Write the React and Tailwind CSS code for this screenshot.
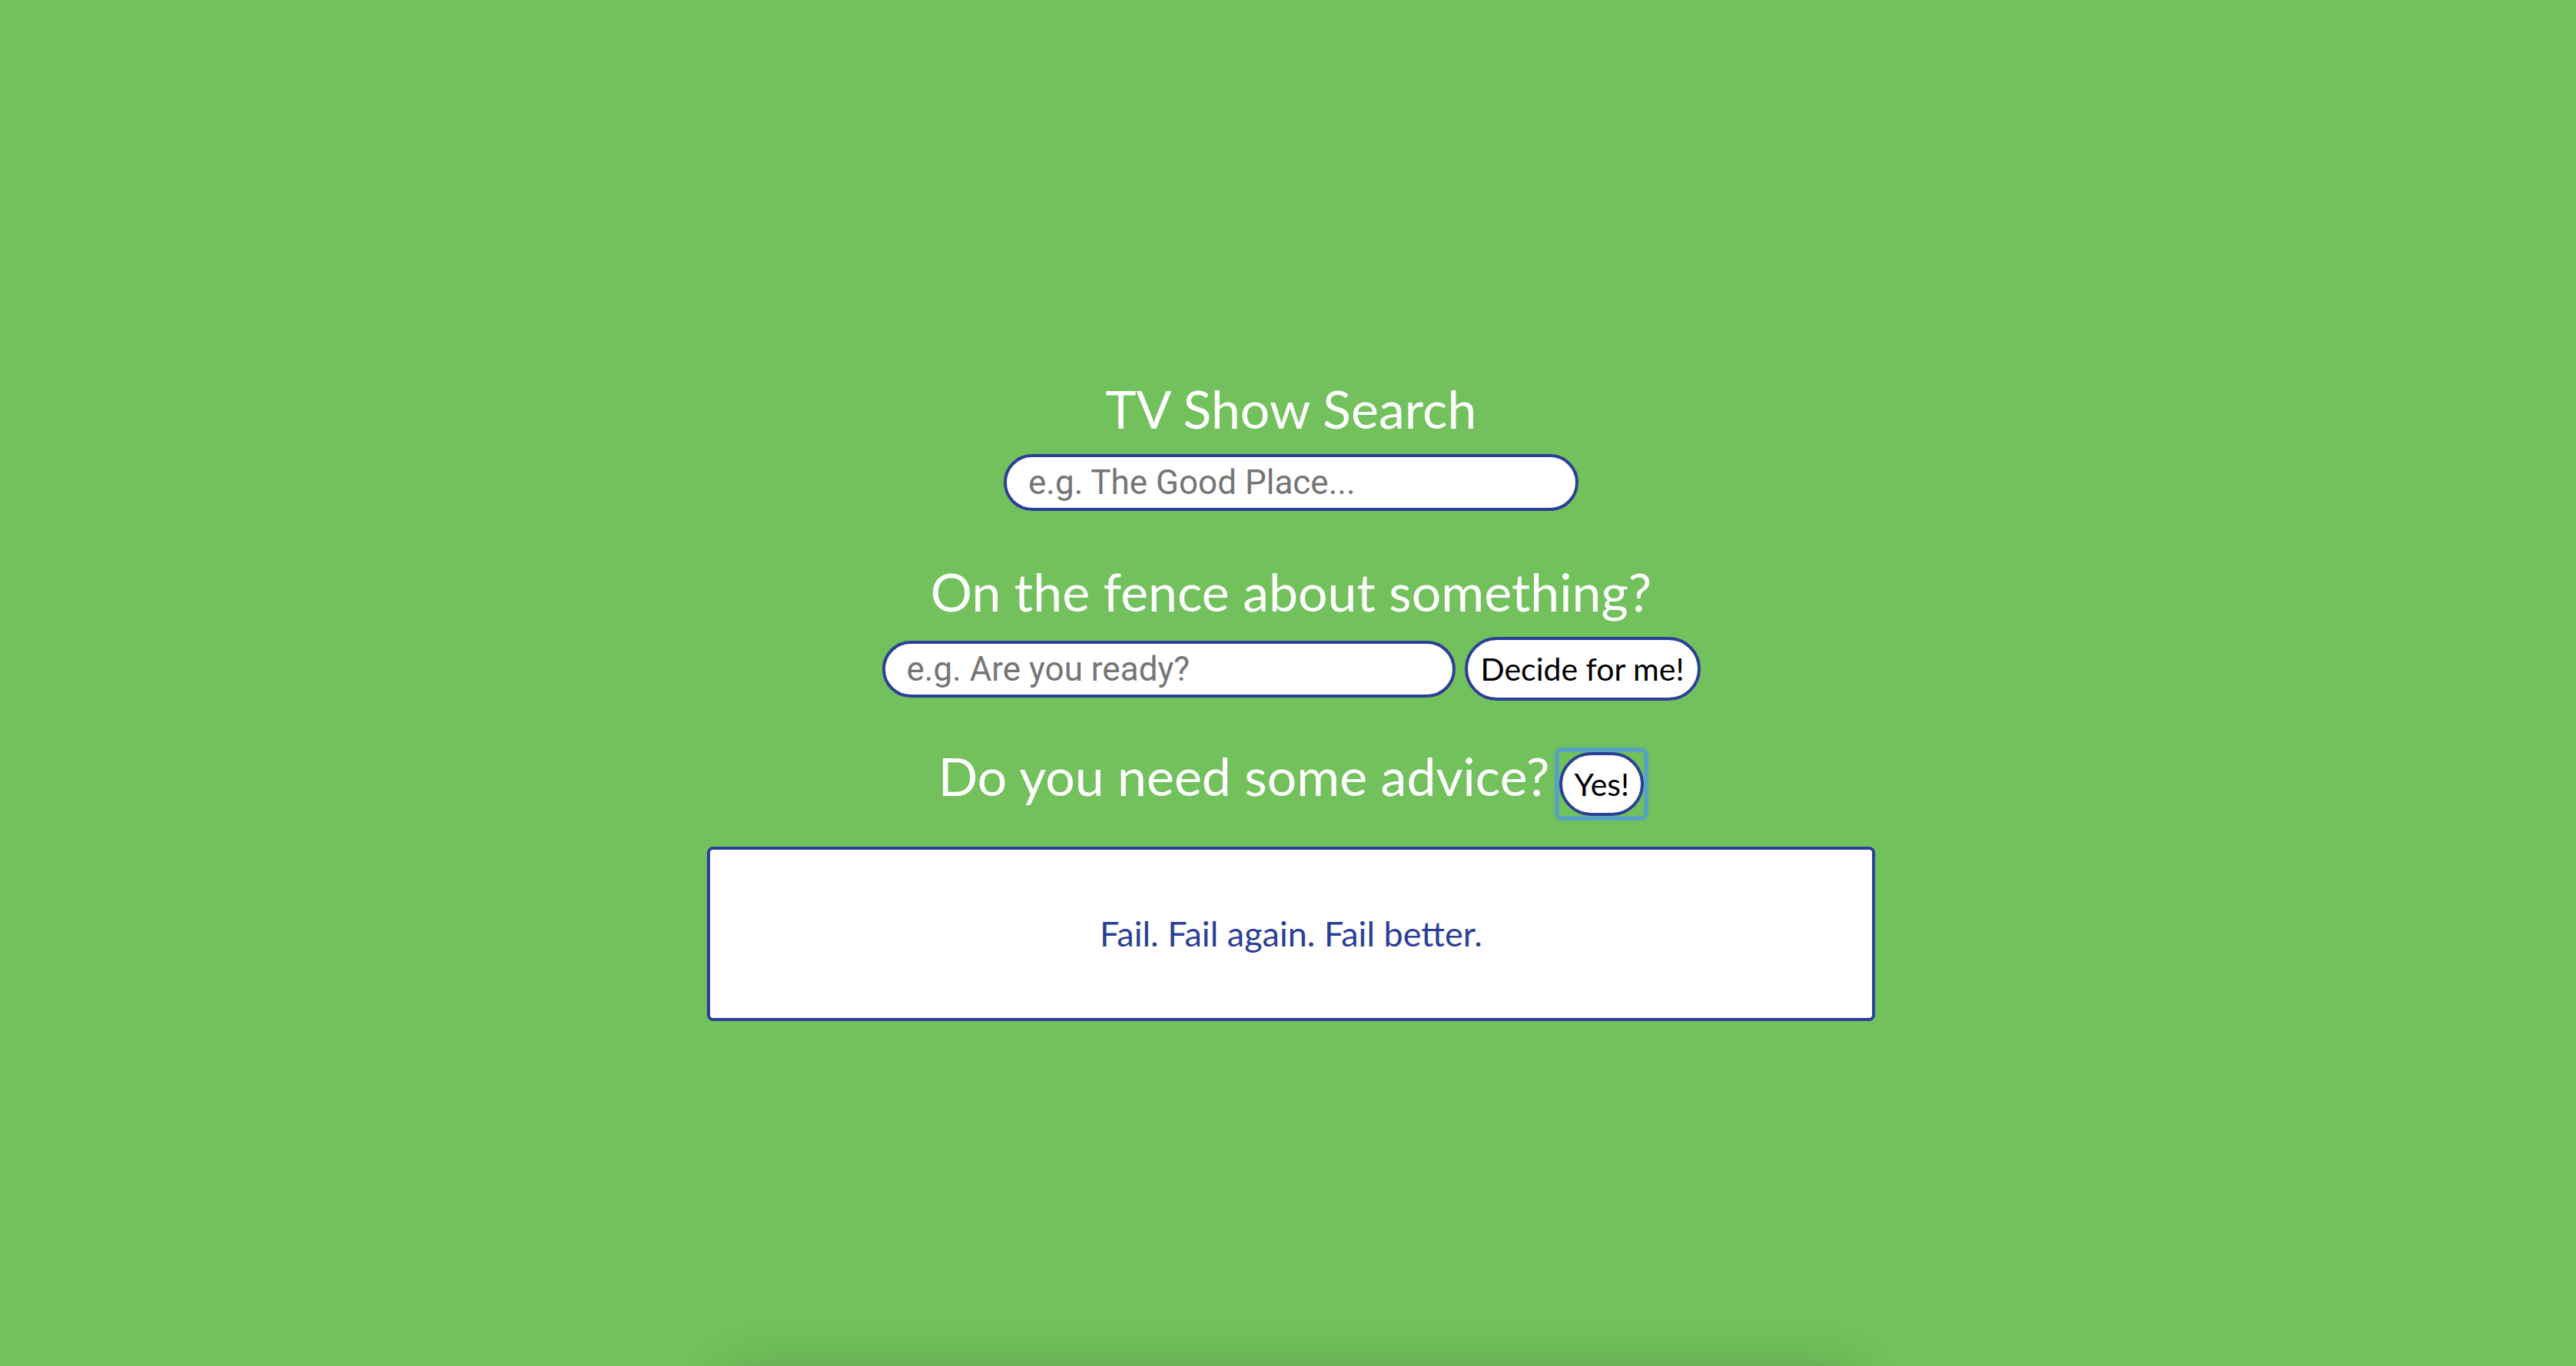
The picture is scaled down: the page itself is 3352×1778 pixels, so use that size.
export default function App() {
  const head = { fontFamily: "Lato, 'Open Sans', sans-serif" };
  return (
    <div className="h-screen overflow-hidden bg-[#72c15c] flex flex-col items-center pl-[8px] pt-[498px]">
      <h1 style={head} className="shrink-0 text-[68px] leading-none text-white font-normal">TV Show Search</h1>
      <input
        type="text"
        placeholder="e.g. The Good Place..."
        className="shrink-0 mt-[25px] w-[748px] h-[74px] rounded-full border-[4px] border-[#2b3f96] bg-white px-[28px] text-[44px] font-['Roboto',sans-serif] text-black placeholder:text-[#757575] outline-none"
      />
      <h2 style={head} className="shrink-0 mt-[71px] text-[68px] leading-none text-white font-normal">On the fence about something?</h2>
      <div className="shrink-0 mt-[25px] flex items-center gap-[12px]">
        <input
          type="text"
          placeholder="e.g. Are you ready?"
          className="shrink-0 w-[746px] h-[74px] rounded-full border-[4px] border-[#2b3f96] bg-white px-[28px] text-[44px] font-['Roboto',sans-serif] text-black placeholder:text-[#757575] outline-none"
        />
        <button style={head} className="shrink-0 h-[83px] w-[307px] rounded-full border-[4px] border-[#2b3f96] bg-white text-[41px] text-black">
          Decide for me!
        </button>
      </div>
      <div className="shrink-0 mt-[64px] flex items-baseline gap-[13px]">
        <h3 style={head} className="text-[68px] leading-none text-white font-normal">Do you need some advice?</h3>
        <div className="flex rounded-[3px] outline-[6px] outline-solid outline-[#58a3bf]">
          <button style={head} className="h-[83px] w-[110px] rounded-full border-[4px] border-[#2b3f96] bg-white text-[41px] text-black">
            Yes!
          </button>
        </div>
      </div>
      <div className="shrink-0 mt-[40px] w-[1520px] h-[227px] rounded-[8px] border-[4px] border-[#2b3f96] bg-white flex items-center justify-center">
        <p style={head} className="text-[45px] leading-none text-[#2b3f96]">Fail. Fail again. Fail better.</p>
      </div>
      <div className="shrink-0 mt-[466px] w-[1460px] h-[200px] rounded-[8px] shadow-[0_-6px_70px_0_rgba(0,0,0,0.2)]"></div>
    </div>
  );
}
